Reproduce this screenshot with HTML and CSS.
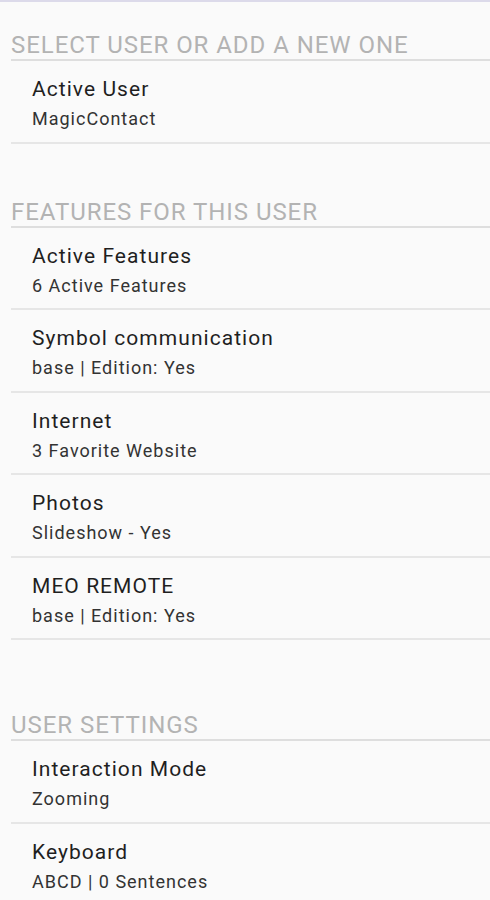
FILE: index.html
```html
<!DOCTYPE html>
<html lang="en">
<head>
    <meta charset="UTF-8">
    <meta name="viewport" content="width=device-width, initial-scale=1.0">
    <title>User Settings</title>
    <link rel="stylesheet" href="styles.css">
</head>
<body>
    <div class="topbar"></div>

    <div class="section-header first">SELECT USER OR ADD A NEW ONE</div>
    <div class="item">
        <div class="item-title">Active User</div>
        <div class="item-sub">MagicContact</div>
    </div>

    <div class="section-header second">FEATURES FOR THIS USER</div>
    <div class="item">
        <div class="item-title">Active Features</div>
        <div class="item-sub">6 Active Features</div>
    </div>
    <div class="item">
        <div class="item-title">Symbol communication</div>
        <div class="item-sub">base | Edition: Yes</div>
    </div>
    <div class="item">
        <div class="item-title">Internet</div>
        <div class="item-sub">3 Favorite Website</div>
    </div>
    <div class="item">
        <div class="item-title">Photos</div>
        <div class="item-sub">Slideshow - Yes</div>
    </div>
    <div class="item">
        <div class="item-title">MEO REMOTE</div>
        <div class="item-sub">base | Edition: Yes</div>
    </div>

    <div class="section-header third">USER SETTINGS</div>
    <div class="item">
        <div class="item-title">Interaction Mode</div>
        <div class="item-sub">Zooming</div>
    </div>
    <div class="item">
        <div class="item-title">Keyboard</div>
        <div class="item-sub">ABCD | 0 Sentences</div>
    </div>
</body>
</html>
```

FILE: styles.css
```css
html {
    background-color: #fafafa;
}
body {
    margin: 0;
    font-family: Roboto, "Liberation Sans", sans-serif;
    background-color: #fafafa;
    overflow: hidden;
}
.topbar {
    height: 2px;
    background-color: #dcdaea;
}
.section-header {
    margin-left: 11px;
    font-size: 24px;
    line-height: 28px;
    letter-spacing: 0.95px;
    color: #b3b3b3;
    border-bottom: 2px solid #dedede;
}
.section-header.first {
    padding-top: 29px;
}
.section-header.second {
    padding-top: 54px;
}
.section-header.third {
    padding-top: 71px;
}
.item {
    margin-left: 11px;
    padding: 15px 0 11.5px 21px;
    border-bottom: 2px solid #e6e6e6;
}
.item-title {
    font-size: 21px;
    line-height: 26px;
    letter-spacing: 1.05px;
    color: #1f1f1f;
}
.item-sub {
    margin-top: 6px;
    font-size: 18px;
    line-height: 22px;
    letter-spacing: 1px;
    color: #333333;
}
```
